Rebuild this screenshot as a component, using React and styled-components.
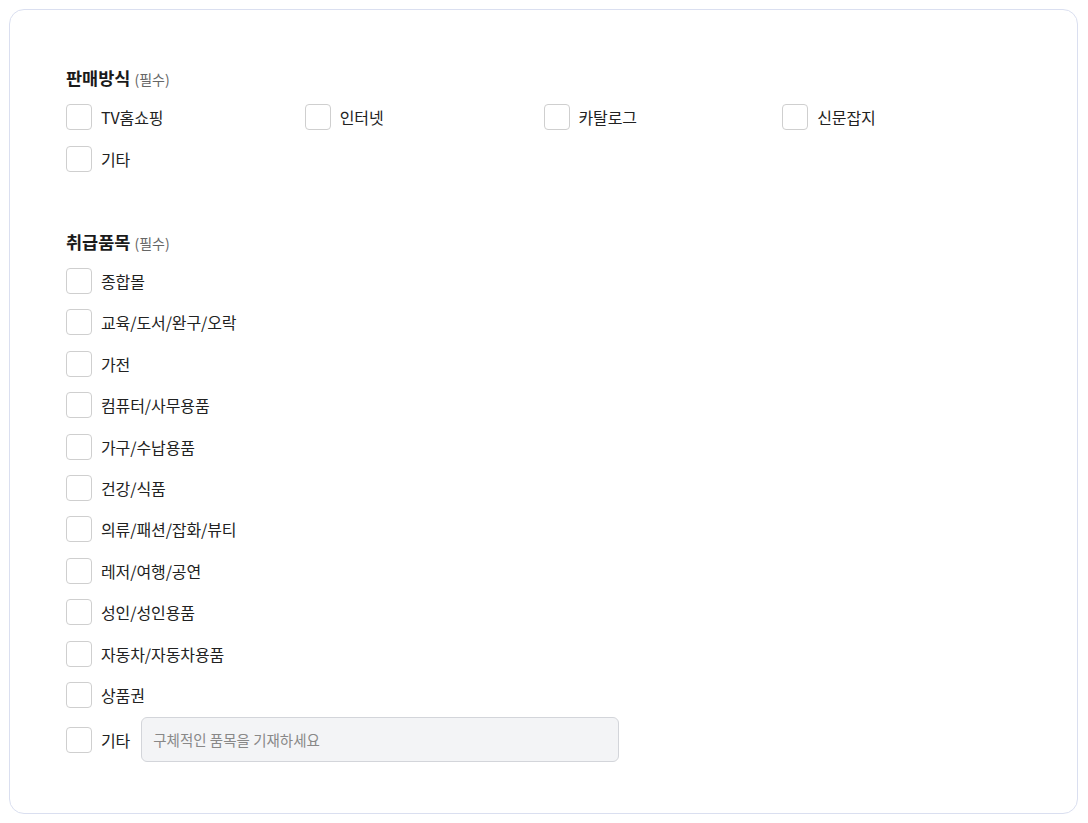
import React from "react";
import styled, { createGlobalStyle } from "styled-components";

const Global = createGlobalStyle`
  html, body { margin: 0; padding: 0; background: #fff; }
  body { font-family: "Noto Sans CJK KR", "Noto Sans", sans-serif; color: #222; }
  * { box-sizing: border-box; }
`;

const Page = styled.div`
  padding: 9px 10px 9px 9px;
`;

const Card = styled.div`
  border: 1px solid #dadff0;
  border-radius: 15px;
  padding: 55px 56px 49px 56px;
  display: flex;
  flex-direction: column;
  gap: 51px;
  min-height: 805px;
`;

const Section = styled.section`
  display: flex;
  flex-direction: column;
`;

const Title = styled.h3`
  margin: 0 0 7px 0;
  height: 26px;
  line-height: 26px;
  font-size: 17.5px;
  font-weight: 700;
  color: #1a1a1a;
  letter-spacing: 0;
`;

const Req = styled.span`
  font-size: 14px;
  font-weight: 400;
  color: #666;
  margin-left: 4px;
  letter-spacing: 0;
`;

const Grid = styled.div`
  display: grid;
  grid-template-columns: ${(p) => `repeat(${p.$cols}, 1fr)`};
  row-gap: ${(p) => p.$gap}px;
`;

const Row = styled.label`
  display: flex;
  align-items: center;
  gap: 9px;
  min-height: 38px;
  cursor: pointer;
`;

const Box = styled.span`
  width: 26px;
  height: 26px;
  border: 1px solid #cfcfcf;
  border-radius: 4px;
  background: #fff;
  flex-shrink: 0;
`;

const Label = styled.span`
  font-size: 16px;
  color: #222;
  letter-spacing: -0.1px;
`;

const TextInput = styled.input`
  margin-left: 2px;
  width: 478px;
  height: 45px;
  border: 1px solid #d3d5da;
  border-radius: 6px;
  background: #f3f4f6;
  padding: 0 11px;
  font-family: "Noto Sans CJK KR", "Noto Sans", sans-serif;
  font-size: 14.5px;
  color: #333;
  outline: none;
  &::placeholder { color: #888; }
`;

const methods = ["TV홈쇼핑", "인터넷", "카탈로그", "신문잡지", "기타"];
const items = [
  "종합몰",
  "교육/도서/완구/오락",
  "가전",
  "컴퓨터/사무용품",
  "가구/수납용품",
  "건강/식품",
  "의류/패션/잡화/뷰티",
  "레저/여행/공연",
  "성인/성인용품",
  "자동차/자동차용품",
  "상품권",
];

export default function App() {
  return (
    <>
      <Global />
      <Page>
        <Card>
          <Section>
            <Title>
              판매방식<Req>(필수)</Req>
            </Title>
            <Grid $cols={4} $gap={4}>
              {methods.map((m) => (
                <Row key={m}>
                  <Box />
                  <Label>{m}</Label>
                </Row>
              ))}
            </Grid>
          </Section>
          <Section>
            <Title>
              취급품목<Req>(필수)</Req>
            </Title>
            <Grid $cols={1} $gap={3.4}>
              {items.map((m) => (
                <Row key={m}>
                  <Box />
                  <Label>{m}</Label>
                </Row>
              ))}
              <Row as="div">
                <Box />
                <Label>기타</Label>
                <TextInput placeholder="구체적인 품목을 기재하세요" />
              </Row>
            </Grid>
          </Section>
        </Card>
      </Page>
    </>
  );
}
